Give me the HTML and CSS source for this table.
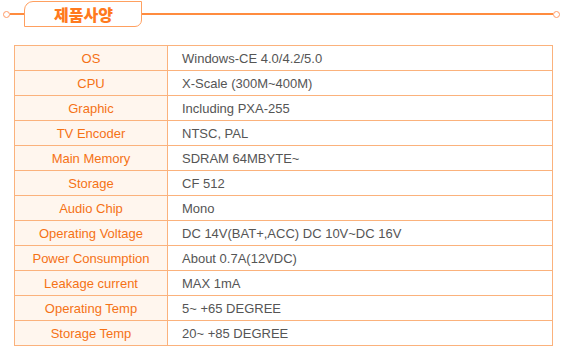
FILE: index.html
```html
<!DOCTYPE html>
<html lang="ko">
<head>
<meta charset="utf-8">
<title>제품사양</title>
<link rel="stylesheet" href="styles.css">
</head>
<body>
<div class="head">
  <span class="dot"></span>
  <span class="line short"></span>
  <div class="tab">제품사양</div>
  <span class="line long"></span>
  <span class="dot"></span>
</div>
<table class="spec">
  <tr><th>OS</th><td>Windows-CE 4.0/4.2/5.0</td></tr>
  <tr><th>CPU</th><td>X-Scale (300M~400M)</td></tr>
  <tr><th>Graphic</th><td>Including PXA-255</td></tr>
  <tr><th>TV Encoder</th><td>NTSC, PAL</td></tr>
  <tr><th>Main Memory</th><td>SDRAM 64MBYTE~</td></tr>
  <tr><th>Storage</th><td>CF 512</td></tr>
  <tr><th>Audio Chip</th><td>Mono</td></tr>
  <tr><th>Operating Voltage</th><td>DC 14V(BAT+,ACC) DC 10V~DC 16V</td></tr>
  <tr><th>Power Consumption</th><td>About 0.7A(12VDC)</td></tr>
  <tr><th>Leakage current</th><td>MAX 1mA</td></tr>
  <tr><th>Operating Temp</th><td>5~ +65 DEGREE</td></tr>
  <tr><th>Storage Temp</th><td>20~ +85 DEGREE</td></tr>
</table>
</body>
</html>
```
FILE: styles.css
```css
html, body {
  margin: 0;
  padding: 0;
  background: #ffffff;
}
body {
  font-family: "Liberation Sans", Arial, sans-serif;
  width: 574px;
  height: 346px;
  overflow: hidden;
}
.head {
  display: flex;
  align-items: center;
  height: 26px;
  margin-top: 1px;
  padding-left: 3px;
}
.dot {
  flex: none;
  width: 5px;
  height: 5px;
  border: 1.5px solid #ff9a66;
  border-radius: 50%;
  background: #fff;
}
.line {
  height: 1.5px;
  background: #ff8c3f;
}
.line.short {
  width: 14px;
  flex: none;
}
.line.long {
  width: 411px;
  flex: none;
}
.tab {
  flex: none;
  box-sizing: border-box;
  width: 118px;
  height: 26px;
  border: 1.5px solid #ffa060;
  border-radius: 9px 0 7px 0;
  display: flex;
  align-items: center;
  justify-content: center;
  padding-left: 1px;
  font-family: "Noto Sans CJK KR", "Noto Sans", sans-serif;
  font-weight: 900;
  font-size: 16px;
  letter-spacing: 0;
  color: #ff7a1e;
}
.spec {
  border-collapse: collapse;
  margin: 18px 0 0 14px;
  width: 539px;
}
.spec th, .spec td {
  border: 1px solid #fbb27c;
  height: 24px;
  padding: 0;
  font-size: 13px;
  line-height: 15px;
}
.spec th {
  width: 152px;
  background: #fff6ee;
  color: #f57216;
  font-weight: 400;
  text-align: center;
}
.spec td {
  color: #555555;
  padding-left: 14px;
  text-align: left;
}
```
